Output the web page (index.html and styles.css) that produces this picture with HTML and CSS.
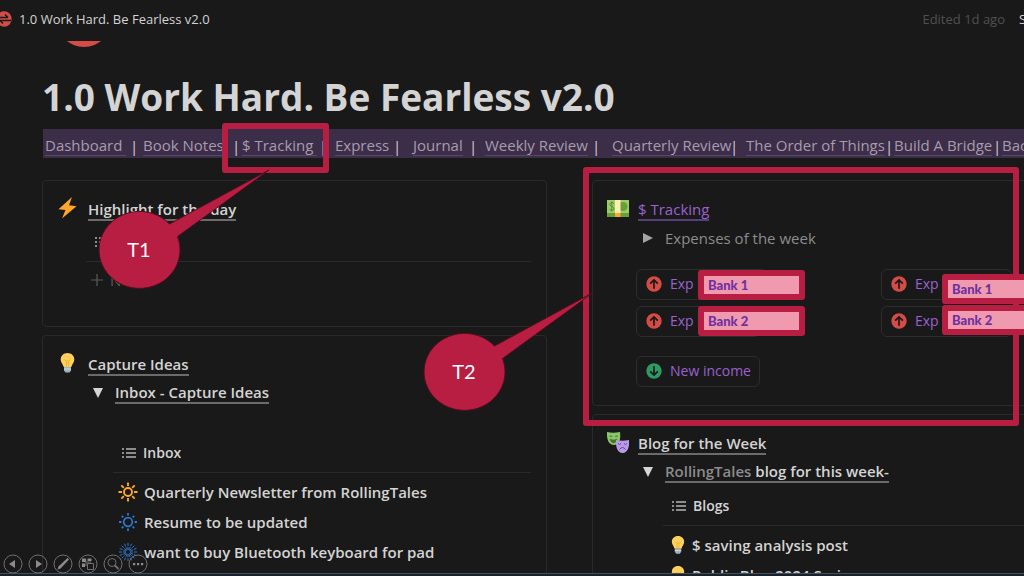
FILE: index.html
```html
<!DOCTYPE html>
<html lang="en">
<head>
<meta charset="utf-8">
<meta name="viewport" content="width=device-width, initial-scale=1">
<title>1.0 Work Hard. Be Fearless v2.0</title>
<link rel="stylesheet" href="styles.css">
</head>
<body>
<svg class="defs" width="0" height="0" aria-hidden="true">
  <symbol id="bulb" viewBox="0 0 16 22">
    <path d="M8 1C4 1 1.200 3.900 1.200 7.500c0 3 2.200 4.800 3 7.500h7.600c.8-2.700 3-4.500 3-7.500C14.800 3.900 12 1 8 1z" fill="#ffd15c"/>
    <path d="M5 7.500l2 2 1-1.500 1 1.500 2-2M7 9.500v5M9 9.500v5" fill="none" stroke="#f0a92e" stroke-width=".8"/>
    <path d="M4.500 15h7v3.500L10 20.500H6l-1.500-2z" fill="#9db4c0"/>
    <path d="M4.500 17h7" stroke="#cfdbe1"/>
  </symbol>
  <symbol id="list" viewBox="0 0 14 12">
    <path d="M4 2h10M4 6h10M4 10h10" stroke="currentColor" stroke-width="1.300"/>
    <path d="M0 2h2M0 6h2M0 10h2" stroke="currentColor" stroke-width="1.600"/>
  </symbol>
  <symbol id="up" viewBox="0 0 16 16">
    <circle cx="8" cy="8" r="7.700" fill="#d44c47"/>
    <path d="M8 12.800V4M4.200 7.700L8 3.900l3.800 3.800" fill="none" stroke="#191919" stroke-width="1.700"/>
  </symbol>
  <symbol id="down" viewBox="0 0 16 16">
    <circle cx="8" cy="8" r="7.700" fill="#2d9964"/>
    <path d="M8 3.200V12M4.200 8.300L8 12.100l3.800-3.800" fill="none" stroke="#191919" stroke-width="1.700"/>
  </symbol>
  <symbol id="sun" viewBox="0 0 20 20">
    <circle cx="10" cy="10" r="4" fill="none" stroke="currentColor" stroke-width="1.900"/>
    <path d="M10 .5v3.500M10 16v3.500M.5 10H4M16 10h3.500M3.300 3.300l2.500 2.500M14.200 14.200l2.500 2.500M3.300 16.700l2.500-2.500M14.200 5.800l2.500-2.500" stroke="currentColor" stroke-width="1.900"/>
  </symbol>
  <symbol id="sun-low" viewBox="0 0 20 20">
    <circle cx="10" cy="10" r="4.300" fill="none" stroke="currentColor" stroke-width="1.700"/>
    <path d="M10 1v2.500M10 16.500V19M1 10h2.500M16.500 10H19M3.800 3.800l1.500 1.500M14.700 14.700l1.500 1.500M3.800 16.200l1.500-1.500M14.700 5.300l1.500-1.500" stroke="currentColor" stroke-width="1.800"/>
  </symbol>
</svg>

<div class="screen">
  <header class="topbar">
    <svg class="topbar-icon" viewBox="0 0 16 16" aria-hidden="true"><circle cx="8" cy="8" r="7.700" fill="#d44c47"/><path d="M1 6.500h11M9 3.500l3 3M15 9.500H4M7 12.500l-3-3" fill="none" stroke="#191919" stroke-width="1.500"/></svg>
    <span class="topbar-title">1.0 Work Hard. Be Fearless v2.0</span>
    <span class="edited">Edited 1d ago</span>
    <button class="share" type="button">Share</button>
  </header>

  <main class="page">
    <div class="cover-icon"></div>
    <h1>1.0 Work Hard. Be Fearless v2.0</h1>
    <nav class="links">
      <a href="#">Dashboard&nbsp;</a><span>|</span>
      <a href="#">Book Notes</a><span>|</span>
      <a href="#">$ Tracking&nbsp;</a><span>|</span>
      <a href="#">Express&nbsp;</a><span>|</span>
      <a href="#">Journal</a><span>|</span>
      <a href="#">Weekly Review</a><span>|</span>
      <a href="#">Quarterly Review</a><span>|</span>
      <a href="#">The Order of Things</a><span>|</span>
      <a href="#">Build A Bridge</a><span>|</span>
      <a href="#">Back</a>
    </nav>

    <div class="columns">
      <div class="column">
        <section class="card highlight">
          <svg class="emoji" viewBox="0 0 20 22" aria-hidden="true"><path d="M14.500 0L1 12.200l7 .8-3.500 8.500L19 9.300l-7.500-1z" fill="#ffa726"/></svg>
          <div class="card-body">
            <a class="heading" href="#">Highlight for the day</a>
            <div class="view-tab"><svg class="list-icon"><use href="#list"/></svg><span>List</span></div>
            <button class="new-row" type="button"><svg viewBox="0 0 12 12" aria-hidden="true"><path d="M6 0v12M0 6h12" stroke="currentColor" stroke-width="1.200"/></svg>New</button>
          </div>
        </section>
        <section class="card fill">
          <svg class="emoji" aria-hidden="true"><use href="#bulb"/></svg>
          <div class="card-body">
            <a class="heading" href="#">Capture Ideas</a>
            <div class="toggle"><span class="tri open"></span><a class="heading" href="#">Inbox - Capture Ideas</a></div>
            <div class="nested inbox">
              <div class="view-tab"><svg class="list-icon"><use href="#list"/></svg><span>Inbox</span></div>
              <ul>
                <li><svg class="sun orange"><use href="#sun"/></svg>Quarterly Newsletter from RollingTales</li>
                <li><svg class="sun blue"><use href="#sun-low"/></svg>Resume to be updated</li>
                <li><svg class="sun blue" viewBox="0 0 20 20"><path d="M10 1v7M10 12v7M1 10h7M12 10h7M3.600 3.600l5 5M11.400 11.400l5 5M3.600 16.400l5-5M11.400 8.600l5-5M6.500 1.700l2.600 6.200M11 12.200l2.600 6.200M1.700 6.500l6.200 2.600M12.200 11l6.200 2.600M6.500 18.300l2.600-6.200M11 7.900l2.600-6.200M1.700 13.500l6.200-2.600M12.200 9l6.200-2.600" stroke="currentColor" stroke-width="1" stroke-dasharray="3 1"/></svg>want to buy Bluetooth keyboard for pad</li>
              </ul>
            </div>
          </div>
        </section>
      </div>

      <div class="column">
        <section class="card money">
          <svg class="emoji wide" viewBox="0 0 22 18" aria-hidden="true"><rect y="1" width="22" height="17" fill="#689f38"/><rect y="1" width="22" height="13" fill="#9ccc65"/><circle cx="16" cy="7.500" r="4.500" fill="#689f38"/><path d="M7 4.500C5 2.500 2 4 3 6s4 1.500 4 3.500-3 2.500-4.500.8M4.800 2.500v10" fill="none" stroke="#558b2f"/><rect x="8" y="1" width="5.500" height="13" fill="#ffecb3"/><rect x="8" y="14" width="5.500" height="4" fill="#ffa726"/></svg>
          <div class="card-body">
            <a class="heading purple" href="#">$ Tracking</a>
            <div class="toggle quiet"><span class="tri"></span><span>Expenses of the week</span></div>
            <div class="actions">
              <div class="action-column">
                <button class="action long" type="button"><svg><use href="#up"/></svg>Exp B</button>
                <button class="action" type="button"><svg><use href="#up"/></svg>Exp B</button>
                <button class="action income" type="button"><svg><use href="#down"/></svg>New income</button>
              </div>
              <div class="action-column">
                <button class="action long" type="button"><svg><use href="#up"/></svg>Exp B</button>
                <button class="action long" type="button"><svg><use href="#up"/></svg>Exp B</button>
              </div>
            </div>
          </div>
        </section>
        <section class="card fill blog">
          <svg class="emoji wide" viewBox="0 0 22 22" aria-hidden="true"><path d="M0 1q6 1.500 13 0c1 8-1 13-6 13S-.5 9 0 1z" fill="#8bc66a"/><path d="M2.500 5.500q1.500-1.500 3 0M8 5.500q1.500-1.500 3 0M3 8q3.500 2 7 0-1 4-3.500 4T3 8z" fill="#42752f" stroke="#42752f" stroke-width=".6"/><path d="M9 9q6 1.500 13 0c.7 8-2 13-6.500 13S8.500 17 9 9z" fill="#b99ae6"/><path d="M11 12.500q1.500 2 3 0M17 12.500q1.500 2 3 0M12.500 18.500q3-4 6 0" fill="none" stroke="#6546a3"/></svg>
          <div class="card-body">
            <a class="heading" href="#">Blog for the Week</a>
            <div class="toggle"><span class="tri open"></span><a class="heading" href="#"><span class="muted">RollingTales</span> blog for this week-</a></div>
            <div class="nested">
              <div class="view-tab"><svg class="list-icon"><use href="#list"/></svg><span>Blogs</span></div>
              <ul>
                <li><svg class="small-bulb"><use href="#bulb"/></svg>$ saving analysis post</li>
                <li><svg class="small-bulb"><use href="#bulb"/></svg>Public Blog 2024 Series</li>
              </ul>
            </div>
          </div>
        </section>
      </div>
    </div>
  </main>
  <div class="bottom-edge"></div>

  <div class="frame frame-nav"></div>
  <div class="frame frame-tracking"></div>
  <div class="frame bank bank-a">Bank 1</div>
  <div class="frame bank bank-b">Bank 2</div>
  <div class="frame bank bank-c">Bank 1</div>
  <div class="frame bank bank-d">Bank 2</div>
  <svg class="callout callout-one" viewBox="0 0 174 124"><path d="M71.500 57L171 3 79.500 69.500A40.500 38.500 0 1 1 71.500 57z"/><text x="41" y="90">T1</text></svg>
  <svg class="callout callout-two" viewBox="0 0 174 124"><path d="M71.500 57L171 3 79.500 69.500A40.500 38.500 0 1 1 71.500 57z"/><text x="41" y="90">T2</text></svg>

  <div class="controls">
    <button type="button" aria-label="Previous slide"><svg viewBox="0 0 20 20"><circle cx="10" cy="10" r="9"/><path class="solid" d="M6 10l6-4v8z"/></svg></button>
    <button type="button" aria-label="Next slide"><svg viewBox="0 0 20 20"><circle cx="10" cy="10" r="9"/><path class="solid" d="M14 10L8 6v8z"/></svg></button>
    <button type="button" aria-label="Pen"><svg viewBox="0 0 20 20"><circle cx="10" cy="10" r="9"/><path class="solid" d="M4.500 15.500l1-3L14.500 4 16 5.500 7.500 14.500z"/></svg></button>
    <button type="button" aria-label="All slides"><svg viewBox="0 0 20 20"><circle cx="10" cy="10" r="9"/><path class="solid" d="M4 4.500h4V8H4zM9.500 4.500h4V7h-4zM4 9.500h3V13H4z"/><path d="M9.500 9.500h6v6h-6zM8 12V8h5"/></svg></button>
    <button type="button" aria-label="Zoom"><svg viewBox="0 0 20 20"><circle cx="10" cy="10" r="9"/><circle cx="9" cy="8.500" r="4"/><path class="handle" d="M12 11.500l3.500 3.500"/></svg></button>
    <button type="button" aria-label="More"><svg viewBox="0 0 20 20"><circle cx="10" cy="10" r="9"/><path class="solid" d="M5 9h2.200v2.200H5zM9 9h2.200v2.200H9zM13 9h2.200v2.200H13z"/></svg></button>
  </div>
</div>
</body>
</html>
```
FILE: styles.css
```css
* { box-sizing: border-box; }

body {
  margin: 0;
  background: #191919;
  color: #d4d4d4;
  font: 15px/28px "Open Sans", "Noto Sans", sans-serif;
}

a { color: inherit; text-decoration: none; }
button { background: none; border: 0; padding: 0; color: inherit; font: inherit; }
svg { display: block; flex: none; }
ul { list-style: none; margin: 0; padding: 0; }
.defs { position: absolute; }

.screen {
  position: relative;
  display: flex;
  flex-direction: column;
  height: 100vh;
  overflow: hidden;
}

.topbar {
  display: flex;
  align-items: center;
  flex: none;
  height: 41px;
  padding-bottom: 4px;
  margin-right: -38px;
  font-size: 13px;
}
.topbar-icon { width: 16px; height: 16px; margin-left: -4px; }
.topbar-title { margin-left: 7px; }
.edited { margin-left: auto; color: #505050; }
.share { width: 43px; margin-left: 14px; text-align: left; }

.page {
  display: flex;
  flex-direction: column;
  flex: 1;
  min-height: 0;
  padding-left: 42px;
  overflow: hidden;
}
.cover-icon {
  flex: none;
  width: 54px;
  height: 54px;
  margin: -48px 0 0 15px;
  border-radius: 50%;
  background: #d44c47;
}
h1 {
  margin: 23px 0 5px;
  font-size: 37px;
  line-height: 54px;
  white-space: nowrap;
}

.links {
  display: grid;
  grid-template-columns: 85px 13px 89px 10px 77px 16px 58px 20px 56px 16px 107px 20px 118px 16px 139px 9px 99px 9px 60px;
  justify-items: start;
  align-items: center;
  flex: none;
  height: 29px;
  margin-left: 1px;
  padding: 4px 0 0 2px;
  background: #3c2d49;
  font-size: 15px;
  line-height: 20px;
  white-space: nowrap;
}
.links a { border-bottom: 1px solid #594866; color: #a79cae; }
.links span { color: #d4d0d8; }

.columns {
  display: grid;
  grid-template-columns: 1fr 1fr;
  gap: 45px;
  flex: 1;
  min-height: 0;
  margin: 22px -73px 0 0;
}
.column { display: flex; flex-direction: column; gap: 8px; }
.card {
  display: flex;
  gap: 9px;
  padding: 12px 15px 0 14px;
  border: 1px solid #2a2a2a;
  border-radius: 4px;
}
.highlight { min-height: 147px; }
.money { min-height: 226px; }
.fill { flex: 1; }
.card-body { flex: 1; min-width: 0; }
.emoji { width: 21px; height: 22px; margin-top: 4px; }
.wide { width: 22px; margin-right: -1px; }
.heading {
  display: inline-block;
  border-bottom: 2px solid #6b6b6b;
  font-weight: 600;
  line-height: 20px;
  vertical-align: middle;
}
.purple { border-color: #57407a; color: #9a62cf; font-weight: 400; }
.muted { color: #8c8c8c; }
.card-body > .heading { margin: 5px 0 3px 1px; }

.toggle { display: flex; align-items: center; gap: 12px; height: 28px; padding-left: 6px; }
.quiet { color: #8c8c8c; }
.tri {
  width: 10px;
  height: 10px;
  background: #a4a4a4;
  clip-path: polygon(0 0, 100% 50%, 0 100%);
}
.open { background: #d4d4d4; clip-path: polygon(0 0, 100% 0, 50% 100%); }

.view-tab {
  display: flex;
  align-items: center;
  gap: 7px;
  height: 38px;
  padding-left: 9px;
  border-bottom: 1px solid #2a2a2a;
  font-size: 14px;
  font-weight: 600;
}
.highlight .view-tab { margin-left: -1px; }
.list-icon { width: 14px; height: 12px; color: #b4b4b4; }
.new-row { display: flex; align-items: center; gap: 7px; height: 36px; padding-left: 4px; color: #5a5a5a; }
.new-row svg { width: 12px; height: 12px; }

.nested { margin-left: 26px; }
.inbox { padding-top: 28px; }
li { display: flex; align-items: center; gap: 6px; height: 30px; padding-left: 5px; font-weight: 600; white-space: nowrap; }
.nested ul { padding-top: 4px; }
.sun { width: 20px; height: 20px; }
.orange { color: #ffa726; }
.blue { color: #2f78cc; }
.small-bulb { width: 16px; height: 20px; }
.blog .nested { padding-top: 2px; }
.blog li { padding-left: 7px; }

.actions { display: grid; grid-template-columns: 1fr 1fr; padding-top: 17px; margin-right: -46px; }
.action-column { display: flex; flex-direction: column; align-items: flex-start; gap: 6px; margin-left: -1px; }
.action {
  display: flex;
  align-items: center;
  gap: 8px;
  width: 124px;
  height: 31px;
  padding-left: 9px;
  border: 1px solid #2d2d2d;
  border-radius: 6px;
  color: #9a62cf;
  font-size: 14px;
  font-weight: 500;
  white-space: nowrap;
}
.action svg { width: 16px; height: 16px; }
.long { width: 131px; }
.income { margin-top: 13px; }

.bottom-edge { flex: none; height: 3px; border-top: 1px solid #46505a; background: #17222c; }

/* Annotations drawn over the page */
.frame { position: absolute; border: 6px solid #b71e42; border-radius: 3px; }
.frame-nav { left: 222px; top: 123px; width: 107px; height: 50px; }
.frame-tracking { left: 583px; top: 167px; width: 436px; height: 259px; }
.bank {
  width: 107px;
  height: 30px;
  padding-left: 4px;
  background: #ef9aaf;
  color: #7030a0;
  font: 900 13px/18px Lato, sans-serif;
}
.bank-a { left: 698px; top: 270px; }
.bank-b { left: 698px; top: 306px; }
.bank-c { left: 942px; top: 274px; }
.bank-d { left: 942px; top: 305px; }
.callout { position: absolute; width: 174px; height: 124px; }
.callout path { fill: #b71e42; stroke: #560d1e; }
.callout text { fill: #fff; font: 20px Lato, sans-serif; text-anchor: middle; }
.callout-one { left: 98px; top: 167px; }
.callout-two { left: 423px; top: 289px; }

.controls { position: absolute; left: 3px; bottom: 2px; display: flex; gap: 5px; }
.controls svg { width: 20px; height: 20px; fill: none; stroke: #707070; stroke-width: 1; }
.controls .solid { fill: #8c8c8c; stroke: none; }
.controls .handle { stroke-width: 2; }
```
